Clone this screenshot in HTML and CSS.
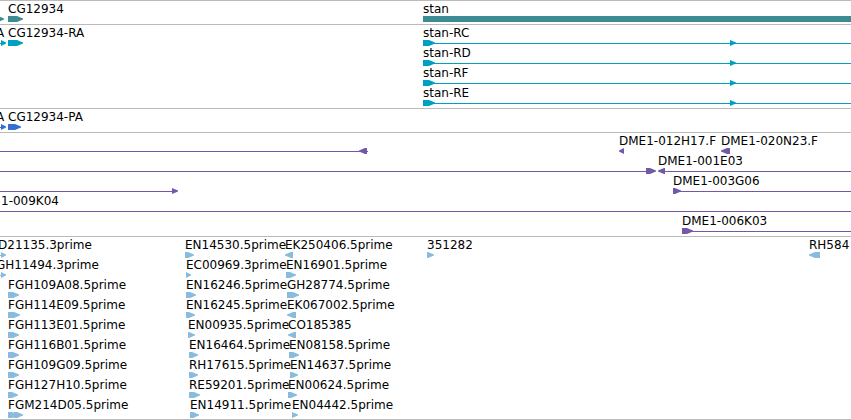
FILE: index.html
```html
<!DOCTYPE html>
<html lang="en">
<head>
<meta charset="utf-8">
<title>Genome browser</title>
<link rel="stylesheet" href="styles.css">
</head>
<body>
<main class="tracks">
  <section class="track gene">
    <div class="row">
      <i class="fwd" style="--x:-2px;--w:6px"></i>
      <span class="label" style="--x:8px">CG12934</span><i class="fwd" style="--x:8px;--w:15px"></i>
      <span class="label" style="--x:423px">stan</span><i class="bar" style="--x:423px"></i>
    </div>
  </section>

  <section class="track transcript">
    <div class="row">
      <span class="label" style="--x:-4px">A</span><i class="line" style="--x:0px;--w:2px"></i><i class="fwd" style="--x:1px;--w:5px"></i>
      <span class="label" style="--x:8px">CG12934-RA</span><i class="fwd" style="--x:8px;--w:15px"></i>
      <span class="label" style="--x:423px">stan-RC</span><i class="line" style="--x:423px"></i><i class="fwd" style="--x:423px;--w:12px"></i><i class="fwd" style="--x:730px;--w:6px"></i>
    </div>
    <div class="row">
      <span class="label" style="--x:423px">stan-RD</span><i class="line" style="--x:423px"></i><i class="fwd" style="--x:423px;--w:12px"></i><i class="fwd" style="--x:730px;--w:6px"></i>
    </div>
    <div class="row">
      <span class="label" style="--x:423px">stan-RF</span><i class="line" style="--x:423px"></i><i class="fwd" style="--x:423px;--w:12px"></i><i class="fwd" style="--x:730px;--w:6px"></i>
    </div>
    <div class="row">
      <span class="label" style="--x:423px">stan-RE</span><i class="line" style="--x:423px"></i><i class="fwd" style="--x:423px;--w:12px"></i><i class="fwd" style="--x:730px;--w:6px"></i>
    </div>
  </section>

  <section class="track protein">
    <div class="row">
      <span class="label" style="--x:-4px">A</span><i class="line" style="--x:0px;--w:2px"></i><i class="fwd" style="--x:1px;--w:5px"></i>
      <span class="label" style="--x:8px">CG12934-PA</span><i class="fwd" style="--x:8px;--w:13px"></i>
    </div>
  </section>

  <section class="track clone">
    <div class="row">
      <i class="line" style="--x:0px;--w:368px"></i><i class="rev" style="--x:359px;--w:8px"></i>
      <span class="label" style="--x:619px">DME1-012H17.F</span><i class="rev" style="--x:619px;--w:5px"></i>
      <span class="label" style="--x:721px">DME1-020N23.F</span><i class="rev" style="--x:721px;--w:9px"></i>
    </div>
    <div class="row">
      <i class="line" style="--x:0px;--w:648px"></i><i class="fwd" style="--x:646px;--w:10px"></i>
      <span class="label" style="--x:658px">DME1-001E03</span><i class="line" style="--x:660px"></i><i class="rev" style="--x:658px;--w:7px"></i>
    </div>
    <div class="row">
      <i class="line" style="--x:0px;--w:173px"></i><i class="fwd" style="--x:172px;--w:6px"></i>
      <span class="label" style="--x:673px">DME1-003G06</span><i class="line" style="--x:673px"></i><i class="fwd" style="--x:673px;--w:8px"></i>
    </div>
    <div class="row">
      <span class="label" style="--x:1px">1-009K04</span><i class="line" style="--x:0px"></i>
    </div>
    <div class="row">
      <span class="label" style="--x:682px">DME1-006K03</span><i class="line" style="--x:682px"></i><i class="fwd" style="--x:682px;--w:11px"></i>
    </div>
  </section>

  <section class="track est">
    <div class="row">
      <span class="label" style="--x:-2px">D21135.3prime</span><i class="line" style="--x:0px;--w:2px"></i><i class="fwd" style="--x:1px;--w:5px"></i>
      <span class="label" style="--x:185px">EN14530.5prime</span><i class="fwd" style="--x:185px;--w:9px"></i>
      <span class="label" style="--x:285px">EK250406.5prime</span><i class="rev" style="--x:285px;--w:8px"></i>
      <span class="label" style="--x:427px">351282</span><i class="fwd" style="--x:427px;--w:7px"></i>
      <span class="label" style="--x:809px">RH584</span><i class="rev" style="--x:809px;--w:11px"></i>
    </div>
    <div class="row">
      <span class="label" style="--x:-4px">GH11494.3prime</span><i class="line" style="--x:0px;--w:2px"></i><i class="fwd" style="--x:1px;--w:5px"></i>
      <span class="label" style="--x:186px">EC00969.3prime</span><i class="fwd" style="--x:186px;--w:5px"></i>
      <span class="label" style="--x:286px">EN16901.5prime</span><i class="fwd" style="--x:286px;--w:10px"></i>
    </div>
    <div class="row">
      <span class="label" style="--x:8px">FGH109A08.5prime</span><i class="fwd" style="--x:8px;--w:11px"></i>
      <span class="label" style="--x:186px">EN16246.5prime</span><i class="fwd" style="--x:186px;--w:10px"></i>
      <span class="label" style="--x:287px">GH28774.5prime</span><i class="fwd" style="--x:287px;--w:12px"></i>
    </div>
    <div class="row">
      <span class="label" style="--x:8px">FGH114E09.5prime</span><i class="fwd" style="--x:8px;--w:12px"></i>
      <span class="label" style="--x:186px">EN16245.5prime</span><i class="fwd" style="--x:186px;--w:9px"></i>
      <span class="label" style="--x:287px">EK067002.5prime</span><i class="rev" style="--x:287px;--w:9px"></i>
    </div>
    <div class="row">
      <span class="label" style="--x:8px">FGH113E01.5prime</span><i class="fwd" style="--x:8px;--w:11px"></i>
      <span class="label" style="--x:188px">EN00935.5prime</span><i class="fwd" style="--x:188px;--w:7px"></i>
      <span class="label" style="--x:288px">CO185385</span><i class="rev" style="--x:288px;--w:8px"></i>
    </div>
    <div class="row">
      <span class="label" style="--x:8px">FGH116B01.5prime</span><i class="fwd" style="--x:8px;--w:11px"></i>
      <span class="label" style="--x:189px">EN16464.5prime</span><i class="fwd" style="--x:189px;--w:9px"></i>
      <span class="label" style="--x:289px">EN08158.5prime</span><i class="fwd" style="--x:289px;--w:10px"></i>
    </div>
    <div class="row">
      <span class="label" style="--x:8px">FGH109G09.5prime</span><i class="fwd" style="--x:8px;--w:11px"></i>
      <span class="label" style="--x:189px">RH17615.5prime</span><i class="fwd" style="--x:189px;--w:9px"></i>
      <span class="label" style="--x:290px">EN14637.5prime</span><i class="fwd" style="--x:290px;--w:8px"></i>
    </div>
    <div class="row">
      <span class="label" style="--x:8px">FGH127H10.5prime</span><i class="fwd" style="--x:8px;--w:10px"></i>
      <span class="label" style="--x:189px">RE59201.5prime</span><i class="fwd" style="--x:189px;--w:11px"></i>
      <span class="label" style="--x:288px">EN00624.5prime</span><i class="fwd" style="--x:288px;--w:9px"></i>
    </div>
    <div class="row">
      <span class="label" style="--x:8px">FGM214D05.5prime</span><i class="fwd" style="--x:8px;--w:10px"></i><i class="fwd" style="--x:14px;--w:9px"></i>
      <span class="label" style="--x:190px">EN14911.5prime</span><i class="fwd" style="--x:190px;--w:9px"></i>
      <span class="label" style="--x:292px">EN04442.5prime</span><i class="fwd" style="--x:292px;--w:6px"></i>
    </div>
  </section>
</main>
</body>
</html>
```

FILE: styles.css
```css
body {
  margin: 0;
  background: #fff;
  color: #000;
  font: 12px/14px "DejaVu Sans", sans-serif;
}

.tracks {
  overflow: hidden;
}

.track {
  padding: 1px 0 2px;
  border-top: 1px solid #bbb;
}

.track:last-child {
  padding-bottom: 1px;
  border-bottom: 1px solid #bbb;
}

.gene { --color: #3d8c93; }
.transcript { --color: #00a0c0; }
.protein { --color: #3470d0; }
.clone { --color: #7358a8; }
.est { --color: #88bbdd; }

.row {
  position: relative;
  height: 20px;
}

.label,
.bar,
.line,
.fwd,
.rev {
  position: absolute;
  left: var(--x);
}

.label {
  top: 0;
  white-space: nowrap;
}

.bar,
.fwd,
.rev {
  top: 14px;
  height: 6px;
  background: var(--color);
}

.bar {
  right: 0;
}

.fwd,
.rev {
  --head: min(6px, 100%);
  width: var(--w);
}

.fwd {
  clip-path: polygon(0 0, calc(100% - var(--head)) 0, 100% 40%, 100% 60%, calc(100% - var(--head)) 100%, 0 100%);
}

.rev {
  clip-path: polygon(100% 0, var(--head) 0, 0 40%, 0 60%, var(--head) 100%, 100% 100%);
}

.line {
  top: 17px;
  width: var(--w, 100%);
  height: 1px;
  background: var(--color);
}
```
